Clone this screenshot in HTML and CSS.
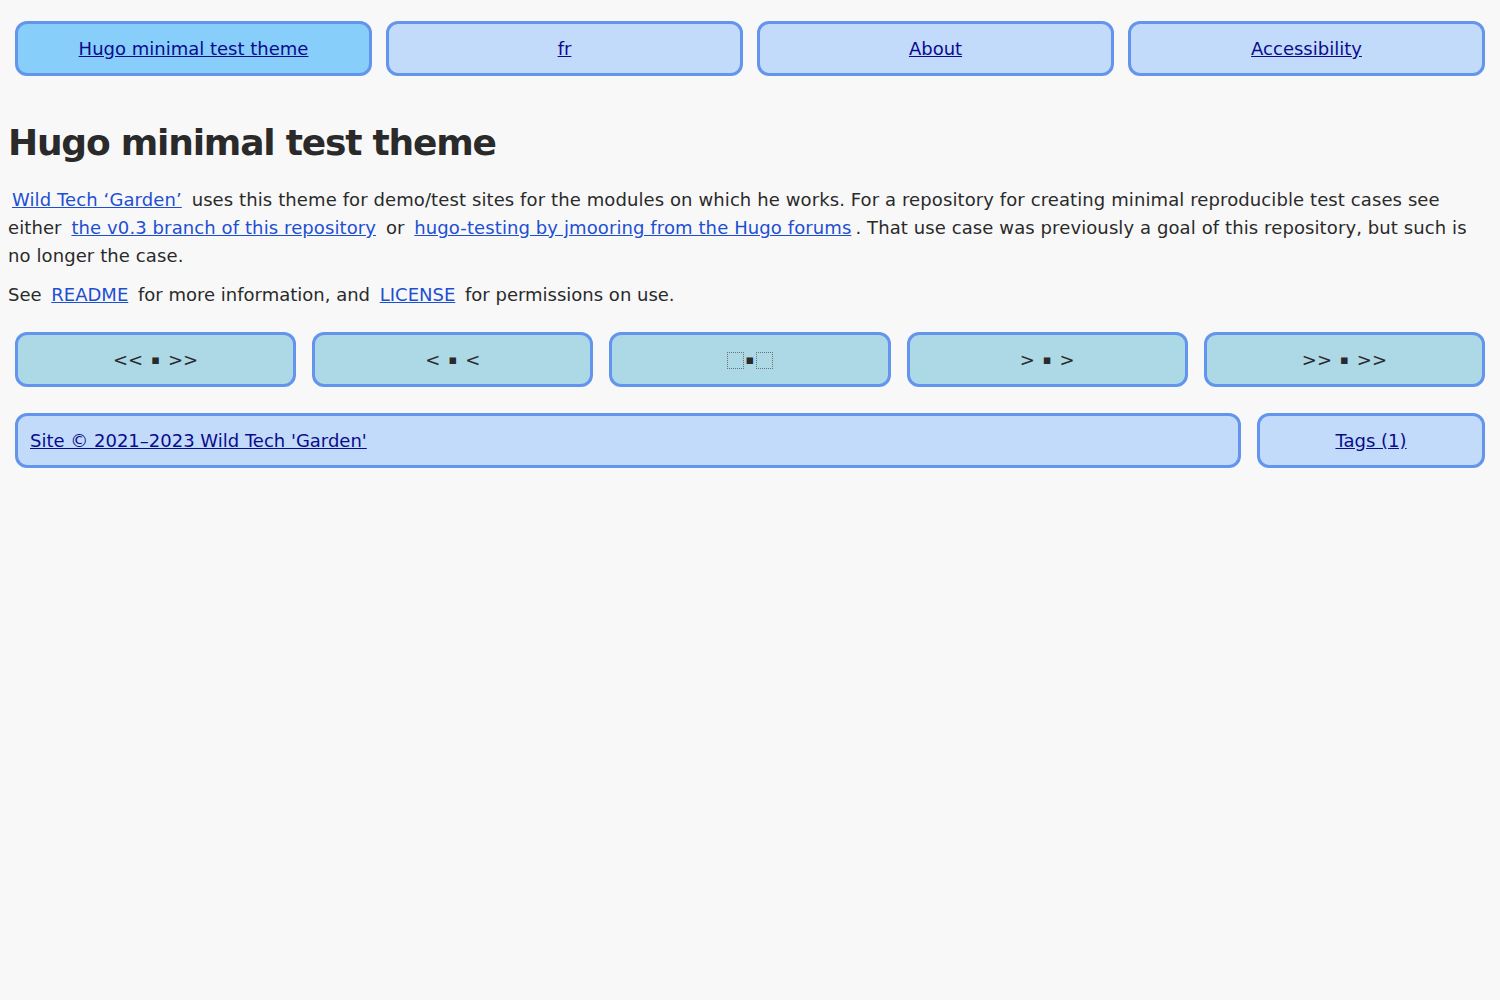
FILE: index.html
```html
<!DOCTYPE html>
<html lang="en">
<head>
<meta charset="utf-8">
<title>Hugo minimal test theme</title>
<link rel="stylesheet" href="styles.css">
</head>
<body>
<nav class="site-nav">
  <a class="nav-item current" href="#">Hugo minimal test theme</a>
  <a class="nav-item" href="#">fr</a>
  <a class="nav-item" href="#">About</a>
  <a class="nav-item" href="#">Accessibility</a>
</nav>
<main class="content">
  <h1 class="title">Hugo minimal test theme</h1>
  <p class="para intro"><a class="link" href="#">Wild Tech ‘Garden’</a> uses this theme for demo/test sites for the modules on which he works. For a repository for creating minimal reproducible test cases see either <a class="link" href="#">the v0.3 branch of this repository</a> or <a class="link" href="#">hugo-testing by jmooring from the Hugo forums</a>. That use case was previously a goal of this repository, but such is no longer the case.</p>
  <p class="para">See <a class="link" href="#">README</a> for more information, and <a class="link" href="#">LICENSE</a> for permissions on use.</p>
</main>
<nav class="pager">
  <span class="pager-item">&lt;&lt;<span class="sq">▪</span>&gt;&gt;</span>
  <span class="pager-item">&lt;<span class="sq">▪</span>&lt;</span>
  <span class="pager-item"><span class="tofu"></span><span class="sq tight">▪</span><span class="tofu"></span></span>
  <span class="pager-item">&gt;<span class="sq">▪</span>&gt;</span>
  <span class="pager-item">&gt;&gt;<span class="sq">▪</span>&gt;&gt;</span>
</nav>
<footer class="site-footer">
  <a class="foot-item copy" href="#">Site © 2021–2023 Wild Tech 'Garden'</a>
  <a class="foot-item tags" href="#">Tags (1)</a>
</footer>
</body>
</html>
```
FILE: styles.css
```css
html, body {
  background: #f8f8f8;
}
body {
  margin: 8px;
  font-family: "DejaVu Sans", Verdana, sans-serif;
  font-size: 18px;
  line-height: 28px;
  color: #2a2a2a;
}
.site-nav {
  display: flex;
  gap: 14px;
  padding: 13px 7px 0;
}
.nav-item {
  flex: 1;
  text-align: center;
  background: #c2dbfa;
  border: 3px solid #6495ed;
  border-radius: 12px;
  padding: 11px 0 10px;
  color: #0b0b8c;
}
.nav-item.current {
  background: #87cefa;
}
.title {
  font-size: 36px;
  line-height: 42px;
  letter-spacing: -1.2px;
  font-weight: bold;
  margin: 46px 0 22px;
  color: #2a2a2a;
}
.para {
  margin: 0 0 11px;
}
.intro {
  letter-spacing: 0.1px;
}
.link {
  color: #1d4fd2;
  margin: 0 4px;
}
.pager {
  display: flex;
  gap: 16px;
  padding: 0 7px;
  margin-top: 23px;
}
.pager-item {
  flex: 1;
  background: #add8e6;
  border: 3px solid #6495ed;
  border-radius: 12px;
  padding: 11px 0 10px;
  display: flex;
  align-items: center;
  justify-content: center;
  height: 28px;
}
.sq {
  font-size: 13px;
  margin: 0 8px;
}
.sq.tight {
  margin: 0 2px;
}
.tofu {
  display: inline-block;
  width: 17px;
  height: 17px;
  border: 1px dotted #707070;
  box-sizing: border-box;
  margin-top: 1px;
}
.site-footer {
  display: flex;
  gap: 16px;
  padding: 0 7px;
  margin-top: 26px;
}
.foot-item {
  background: #c2dbfa;
  border: 3px solid #6495ed;
  border-radius: 12px;
  padding: 11px 12px 10px;
  color: #0b0b8c;
}
.copy {
  flex: 1;
}
.tags {
  width: 222px;
  flex: none;
  text-align: center;
  padding: 11px 0 10px;
}
```
